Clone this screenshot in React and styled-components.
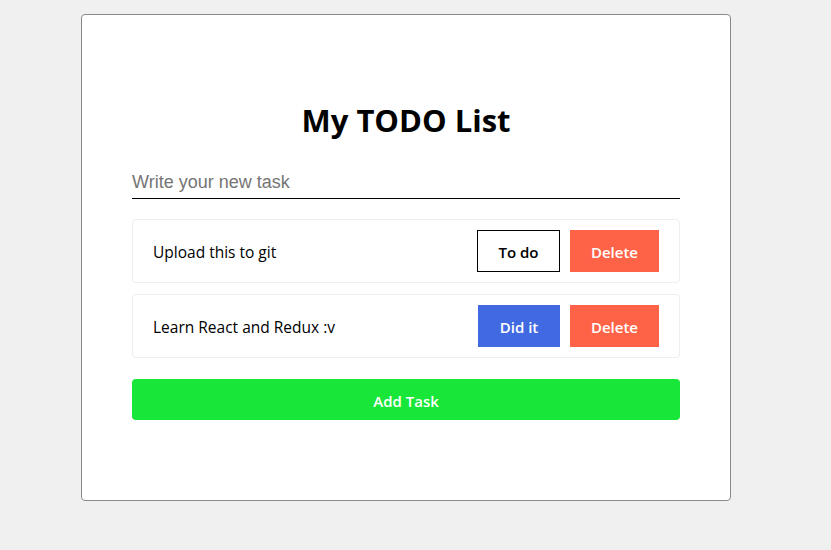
import React, { useState } from 'react'
import styled, { createGlobalStyle } from 'styled-components'

const GlobalStyle = createGlobalStyle`
  body {
    margin: 0;
    background: #f0f0f0;
    font-family: 'Open Sans', 'Noto Sans', sans-serif;
  }
`;

const Card = styled.div`
  box-sizing: border-box;
  width: 650px;
  height: 487px;
  margin: 14px 0 0 81px;
  background: #fff;
  border: 1px solid #8a8a8a;
  border-radius: 4px;
  padding: 83px 50px 0;
`;

const Title = styled.h1`
  margin: 0;
  text-align: center;
  font-size: 31px;
  line-height: 44px;
  font-weight: 700;
  color: #000;
`;

const TaskInput = styled.input`
  box-sizing: border-box;
  display: block;
  width: 100%;
  height: 32px;
  margin-top: 25px;
  padding: 0;
  border: none;
  border-bottom: 1px solid #000;
  outline: none;
  font-family: 'Liberation Sans', Arial, sans-serif;
  font-size: 18px;
  color: #000;

  ::placeholder {
    color: #777;
  }
`;

const TaskList = styled.div`
  display: flex;
  flex-direction: column;
  gap: 11px;
  margin-top: 20px;
`;

const TaskRow = styled.div`
  box-sizing: border-box;
  height: 64px;
  display: flex;
  align-items: center;
  padding: 0 20px;
  border: 1px solid #eeeeee;
  border-radius: 4px;
`;

const TaskText = styled.span`
  flex: 1;
  font-size: 15.5px;
  padding-top: 2px;
  color: #000;
`;

const Buttons = styled.div`
  display: flex;
  gap: 10px;
`;

const Button = styled.button`
  box-sizing: border-box;
  height: 42px;
  width: ${p => p.$w}px;
  padding: 2px 0 0;
  border: ${p => (p.$outline ? '1px solid #000' : 'none')};
  background: ${p => p.$bg};
  color: ${p => (p.$outline ? '#000' : '#fff')};
  font-family: 'Open Sans', 'Noto Sans', sans-serif;
  font-size: 15px;
  font-weight: 600;
  cursor: pointer;
`;

const AddButton = styled.button`
  display: block;
  width: 100%;
  height: 41px;
  margin-top: 21px;
  padding: 2px 0 0;
  border: none;
  border-radius: 4px;
  background: #18e638;
  color: #fff;
  font-family: 'Open Sans', 'Noto Sans', sans-serif;
  font-size: 15px;
  font-weight: 600;
  cursor: pointer;
`;

const initialTasks = [
  { id: 1, text: 'Upload this to git', done: false },
  { id: 2, text: 'Learn React and Redux :v', done: true },
]

const App = () => {
  const [tasks, setTasks] = useState(initialTasks)
  const [value, setValue] = useState('')

  const toggle = id => setTasks(tasks.map(t => (t.id === id ? { ...t, done: !t.done } : t)))
  const remove = id => setTasks(tasks.filter(t => t.id !== id))
  const add = () => {
    if (!value.trim()) return
    setTasks([...tasks, { id: Date.now(), text: value, done: false }])
    setValue('')
  }

  return (
    <>
      <GlobalStyle />
      <Card>
        <Title>My TODO List</Title>
        <TaskInput
          placeholder="Write your new task"
          value={value}
          onChange={e => setValue(e.target.value)}
        />
        <TaskList>
          {tasks.map(t => (
            <TaskRow key={t.id}>
              <TaskText>{t.text}</TaskText>
              <Buttons>
                {t.done ? (
                  <Button $w={82} $bg="#4169e1" onClick={() => toggle(t.id)}>Did it</Button>
                ) : (
                  <Button $w={83} $bg="#fff" $outline onClick={() => toggle(t.id)}>To do</Button>
                )}
                <Button $w={89} $bg="#ff6347" onClick={() => remove(t.id)}>Delete</Button>
              </Buttons>
            </TaskRow>
          ))}
        </TaskList>
        <AddButton onClick={add}>Add Task</AddButton>
      </Card>
    </>
  )
}

export default App
